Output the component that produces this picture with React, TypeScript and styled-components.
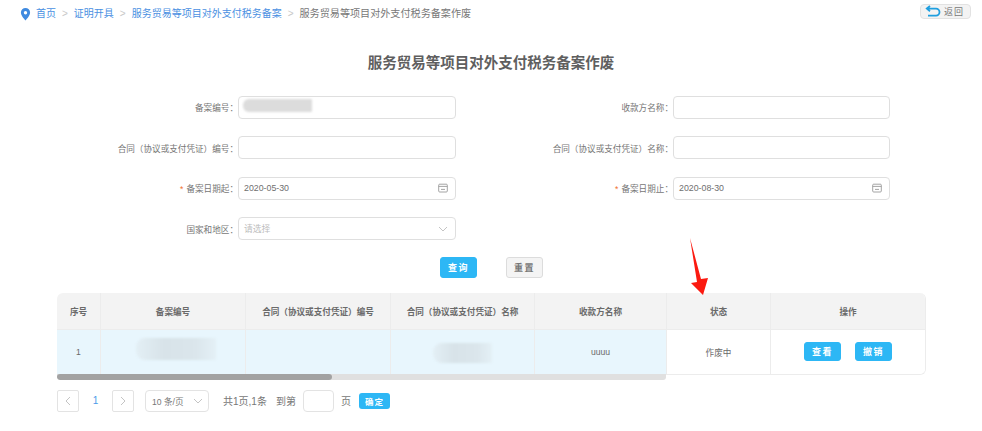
import React from "react";
import styled, { createGlobalStyle } from "styled-components";

const Global = createGlobalStyle`
  html, body { margin: 0; padding: 0; background: #fff; }
  body { font-family: "Liberation Sans", "Noto Sans CJK SC", sans-serif; color: #666; overflow: hidden; }
  * { box-sizing: border-box; }
`;

const Page = styled.div`
  position: relative;
  width: 982px;
  height: 431px;
  padding: 3px 11px 0 20px;
  overflow: hidden;
`;
const TopBar = styled.div`
  display: flex;
  align-items: center;
  height: 22px;
  justify-content: space-between;
`;
const Crumbs = styled.nav`
  display: flex;
  align-items: center;
  font-size: 10px;
  line-height: 14px;
`;
const CrumbLink = styled.span`
  color: #4a90e2;
`;
const CrumbNow = styled.span`
  color: #777;
  font-size: 10.1px;
`;
const Sep = styled.span`
  color: #c8c8c8;
  margin: 0 6px;
  font-size: 10px;
`;
const Pin = styled.svg`
  width: 11px;
  height: 13px;
  margin-right: 5px;
  display: block;
`;
const BackBtn = styled.button`
  align-self: flex-start;
  margin-top: 1px;
  width: 51px;
  height: 15px;
  border: 1px solid #e2e2e2;
  border-radius: 4px;
  background: #f3f3f3;
  display: flex;
  align-items: center;
  padding: 0 0 0 4px;
  gap: 3px;
  font: 9px "Liberation Sans", "Noto Sans CJK SC", sans-serif;
  letter-spacing: 1px;
  color: #777;
`;
const Title = styled.h1`
  margin: 27px 0 0;
  width: 942px;
  text-align: center;
  font-size: 14.5px;
  line-height: 22px;
  font-weight: 700;
  color: #5f5f5f;
`;
const Form = styled.div`
  display: grid;
  grid-template-columns: 436px 434px;
  row-gap: 17.6px;
  margin-top: 21.5px;
`;
const Field = styled.div`
  display: flex;
  align-items: center;
  height: 23px;
`;
const Label = styled.label<{ $w: number }>`
  width: ${(p) => p.$w}px;
  flex: none;
  text-align: right;
  font-size: 8.6px;
  color: #777;
`;
const Star = styled.span`
  color: #f0702a;
  margin-right: 3px;
`;
const InputBox = styled.div`
  position: relative;
  width: 218px;
  height: 23px;
  border: 1px solid #dfdfdf;
  border-radius: 4px;
  background: #fff;
  display: flex;
  align-items: center;
  justify-content: space-between;
  padding: 0 7px 0 5px;
  font-size: 8.8px;
  color: #6f6f6f;
`;
const Placeholder = styled.span`
  color: #bdbdbd;
`;
const Smudge = styled.div`
  position: absolute;
  left: 4px;
  top: 2px;
  width: 69px;
  height: 13px;
  background: #dcdcdc;
  border-radius: 6px 1px 1px 6px;
  filter: blur(1px);
`;
const Actions = styled.div`
  display: flex;
  gap: 29px;
  margin: 16.5px 0 0 420px;
`;
const Btn = styled.button<{ $ghost?: boolean }>`
  width: 37px;
  height: 21px;
  padding: 0;
  border-radius: 3px;
  border: 1px solid ${(p) => (p.$ghost ? "#dcdcdc" : "#2db7f5")};
  background: ${(p) => (p.$ghost ? "#f4f4f4" : "#2db7f5")};
  color: ${(p) => (p.$ghost ? "#777" : "#fff")};
  font: 700 9px "Liberation Sans", "Noto Sans CJK SC", sans-serif;
  letter-spacing: 1.5px;
`;
const TableArea = styled.div`
  display: flex;
  margin: 15px 0 0 37px;
  width: 869px;
  align-items: flex-start;
`;
const ScrollPane = styled.div`
  width: 609px;
  flex: none;
`;
const Fixed = styled.div`
  width: 260px;
  flex: none;
  border: 1px solid #ececec;
  border-top: 0;
  border-radius: 0 6px 6px 0;
  overflow: hidden;
`;
const Row = styled.div<{ $head?: boolean; $tint?: boolean }>`
  display: flex;
  height: ${(p) => (p.$head ? 37 : 44)}px;
  background: ${(p) => (p.$head ? "#f3f3f3" : p.$tint ? "#e8f6fd" : "#fff")};
  font-size: 8.6px;
  font-weight: ${(p) => (p.$head ? 700 : 400)};
  color: #6a6a6a;
  ${(p) => (p.$head ? "border-bottom: 1px solid #ececec;" : "")}
`;
const LeftRows = styled.div`
  border-radius: 6px 0 0 0;
  overflow: hidden;
`;
const Cell = styled.div<{ $w: number }>`
  position: relative;
  width: ${(p) => p.$w}px;
  flex: none;
  display: flex;
  align-items: center;
  justify-content: center;
  gap: 8px;
  border-right: 1px solid #ececec;
  &:last-child { border-right: 0; }
`;
const Blur = styled.div<{ $l: number; $t: number; $w: number; $h: number }>`
  position: absolute;
  left: ${(p) => p.$l}px;
  top: ${(p) => p.$t}px;
  width: ${(p) => p.$w}px;
  height: ${(p) => p.$h}px;
  background: linear-gradient(90deg, #e3eff5, #d8e3e9 35%, #dbe6ec 75%, #e4f0f6);
  border-radius: 9px 2px 2px 9px;
  filter: blur(1px);
`;
const Scroll = styled.div`
  height: 6px;
  background: #e0e0e0;
  border-radius: 0 0 3px 3px;
  overflow: hidden;
`;
const Thumb = styled.div`
  width: 275px;
  height: 100%;
  background: #a2a2a2;
  border-radius: 3px;
`;
const SmallBtn = styled(Btn)<{ $gap?: number }>`
  height: 19px;
  margin-left: ${(p) => p.$gap ?? 0}px;
`;
const Pager = styled.div`
  display: flex;
  align-items: center;
  margin: 10px 0 0 37px;
  height: 22px;
  font-size: 10px;
  color: #777;
`;
const PageBtn = styled.div`
  width: 22px;
  height: 22px;
  border: 1px solid #e3e3e3;
  border-radius: 2px;
  display: flex;
  align-items: center;
  justify-content: center;
`;
const PageNum = styled.span`
  width: 33px;
  text-align: center;
  color: #4a9be8;
`;
const SizeSel = styled.div`
  width: 64px;
  height: 22px;
  margin-left: 11px;
  border: 1px solid #e3e3e3;
  border-radius: 4px;
  display: flex;
  align-items: center;
  justify-content: space-between;
  padding: 0 5px 0 6px;
  font-size: 8.6px;
`;
const Info = styled.span`
  margin-left: 14px;
`;
const Jump = styled.span`
  margin-left: 9px;
`;
const JumpInput = styled.div`
  width: 31px;
  height: 22px;
  margin: 0 7px;
  border: 1px solid #e3e3e3;
  border-radius: 4px;
`;
const Confirm = styled.button`
  width: 31px;
  height: 16px;
  margin-left: 8px;
  padding: 0;
  border: 0;
  border-radius: 3px;
  background: #2db7f5;
  color: #fff;
  font: 700 8.5px "Liberation Sans", "Noto Sans CJK SC", sans-serif;
  letter-spacing: 1px;
`;
const Arrow = styled.svg`
  position: absolute;
  left: 688px;
  top: 236px;
  width: 24px;
  height: 62px;
`;
const ChevronIcon = styled.svg`
  color: #c4c4c4;
  fill: none;
  stroke: currentColor;
  stroke-width: 1;
`;

const Chevron = ({ d = "M1 1l4 4 4-4", w = 10, h = 6 }: { d?: string; w?: number; h?: number }) => (
  <ChevronIcon width={w} height={h} viewBox={`0 0 ${w} ${h}`}>
    <path d={d} />
  </ChevronIcon>
);
const Cal = () => (
  <svg width="10" height="10" viewBox="0 0 10 10" fill="none" stroke="#9a9a9a" strokeWidth="0.9">
    <rect x="0.7" y="1.2" width="8.6" height="7.8" rx="1" />
    <path d="M0.7 3.4h8.6M3 6.4h4" />
  </svg>
);

export default function App() {
  return (
    <Page>
      <Global />
      <TopBar>
        <Crumbs>
          <Pin viewBox="0 0 11 13">
            <path fillRule="evenodd" fill="#3f8ae0" d="M5.5 0a4.6 4.6 0 0 1 4.6 4.6c0 3-3 6-4.6 8C3.9 10.6.9 7.6.9 4.6A4.6 4.6 0 0 1 5.5 0zm0 3a1.7 1.7 0 1 0 0 3.4 1.7 1.7 0 0 0 0-3.4z" />
          </Pin>
          <CrumbLink>首页</CrumbLink>
          <Sep>&gt;</Sep>
          <CrumbLink>证明开具</CrumbLink>
          <Sep>&gt;</Sep>
          <CrumbLink>服务贸易等项目对外支付税务备案</CrumbLink>
          <Sep>&gt;</Sep>
          <CrumbNow>服务贸易等项目对外支付税务备案作废</CrumbNow>
        </Crumbs>
        <BackBtn>
          <svg width="16" height="13" viewBox="0 0 16 13" fill="none" stroke="#1f9fe0" strokeWidth="1.8">
            <path d="M5 1L1.8 3.6 5 6.2M2 3.6h9a3.2 3.2 0 0 1 0 7H3" />
          </svg>
          返回
        </BackBtn>
      </TopBar>
      <Title>服务贸易等项目对外支付税务备案作废</Title>
      <Form>
        <Field>
          <Label $w={218}>备案编号：</Label>
          <InputBox><Smudge /></InputBox>
        </Field>
        <Field>
          <Label $w={217}>收款方名称：</Label>
          <InputBox />
        </Field>
        <Field>
          <Label $w={218}>合同（协议或支付凭证）编号：</Label>
          <InputBox />
        </Field>
        <Field>
          <Label $w={217}>合同（协议或支付凭证）名称：</Label>
          <InputBox />
        </Field>
        <Field>
          <Label $w={218}><Star>*</Star>备案日期起：</Label>
          <InputBox>2020-05-30<Cal /></InputBox>
        </Field>
        <Field>
          <Label $w={217}><Star>*</Star>备案日期止：</Label>
          <InputBox>2020-08-30<Cal /></InputBox>
        </Field>
        <Field>
          <Label $w={218}>国家和地区：</Label>
          <InputBox>
            <Placeholder>请选择</Placeholder>
            <Chevron />
          </InputBox>
        </Field>
      </Form>
      <Actions>
        <Btn>查询</Btn>
        <Btn $ghost>重置</Btn>
      </Actions>
      <TableArea>
        <ScrollPane>
          <LeftRows>
            <Row $head>
              <Cell $w={44}>序号</Cell>
              <Cell $w={145}>备案编号</Cell>
              <Cell $w={145}>合同（协议或支付凭证）编号</Cell>
              <Cell $w={144}>合同（协议或支付凭证）名称</Cell>
              <Cell $w={131}>收款方名称</Cell>
            </Row>
            <Row $tint>
              <Cell $w={44}>1</Cell>
              <Cell $w={145}><Blur $l={35} $t={8} $w={80} $h={22} /></Cell>
              <Cell $w={145} />
              <Cell $w={144}><Blur $l={42} $t={13} $w={59} $h={20} /></Cell>
              <Cell $w={131}>uuuu</Cell>
            </Row>
          </LeftRows>
          <Scroll><Thumb /></Scroll>
        </ScrollPane>
        <Fixed>
          <Row $head>
            <Cell $w={104}>状态</Cell>
            <Cell $w={154}>操作</Cell>
          </Row>
          <Row>
            <Cell $w={104}>作废中</Cell>
            <Cell $w={154}>
              <SmallBtn>查看</SmallBtn>
              <SmallBtn $gap={6}>撤销</SmallBtn>
            </Cell>
          </Row>
        </Fixed>
      </TableArea>
      <Pager>
        <PageBtn><Chevron d="M5 1L1 5l4 4" w={6} h={10} /></PageBtn>
        <PageNum>1</PageNum>
        <PageBtn><Chevron d="M1 1l4 4-4 4" w={6} h={10} /></PageBtn>
        <SizeSel>10 条/页<Chevron /></SizeSel>
        <Info>共1页,1条</Info>
        <Jump>到第</Jump>
        <JumpInput />
        <span>页</span>
        <Confirm>确定</Confirm>
      </Pager>
      <Arrow viewBox="0 0 24 62">
        <path fill="#fb1a10" d="M2 2L13 43 20 42 15 59 3 47 9 46Z" />
      </Arrow>
    </Page>
  );
}
